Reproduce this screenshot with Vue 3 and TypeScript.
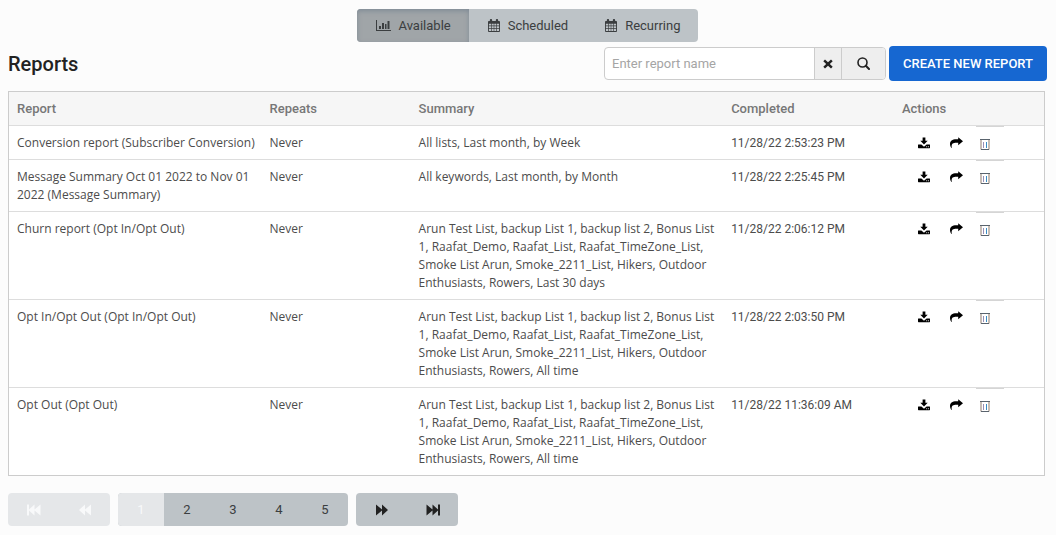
<script setup lang="ts">
import { ref } from 'vue'

interface Report {
  name: string
  repeats: string
  summary: string
  completed: string
}

const lists =
  'Arun Test List, backup List 1, backup list 2, Bonus List 1, Raafat_Demo, Raafat_List, Raafat_TimeZone_List, Smoke List Arun, Smoke_2211_List, Hikers, Outdoor Enthusiasts, Rowers, '

const reports: Report[] = [
  { name: 'Conversion report (Subscriber Conversion)', repeats: 'Never', summary: 'All lists, Last month, by Week', completed: '11/28/22 2:53:23 PM' },
  { name: 'Message Summary Oct 01 2022 to Nov 01 2022 (Message Summary)', repeats: 'Never', summary: 'All keywords, Last month, by Month', completed: '11/28/22 2:25:45 PM' },
  { name: 'Churn report (Opt In/Opt Out)', repeats: 'Never', summary: lists + 'Last 30 days', completed: '11/28/22 2:06:12 PM' },
  { name: 'Opt In/Opt Out (Opt In/Opt Out)', repeats: 'Never', summary: lists + 'All time', completed: '11/28/22 2:03:50 PM' },
  { name: 'Opt Out (Opt Out)', repeats: 'Never', summary: lists + 'All time', completed: '11/28/22 11:36:09 AM' },
]

const tabs = ['Available', 'Scheduled', 'Recurring']
const activeTab = ref('Available')
const query = ref('')
const page = ref(1)
</script>

<template>
  <main class="page">
    <nav class="tabs" aria-label="Report types">
      <button
        v-for="tab in tabs"
        :key="tab"
        type="button"
        class="tab"
        :class="{ active: tab === activeTab }"
        @click="activeTab = tab"
      >
        <svg v-if="tab === 'Available'" class="chart" viewBox="0 0 15 13" aria-hidden="true">
          <path d="M0 1h1v10h14v1H0zM3 7h2v3H3zM6 4h2v6H6zM9 5h1.500v5H9zM11.500 2h2v8h-2z" />
        </svg>
        <svg v-else class="calendar" viewBox="0 0 13 14" aria-hidden="true">
          <path
            fill-rule="evenodd"
            d="M1 2h1V1q0-1 1-1h.5q1 0 1 1v1h4V1q0-1 1-1h.5q1 0 1 1v1h1q1 0 1 1v10q0 1-1 1H1q-1 0-1-1V3q0-1 1-1zM1 5v2h2.300V5zM4 5v2h2.200V5zM6.800 5v2H9V5zM9.700 5v2H12V5zM1 7.700v2h2.300v-2zM4 7.700v2h2.200v-2zM6.800 7.700v2H9v-2zM9.700 7.700v2H12v-2zM1 10.400V13h2.300v-2.600zM4 10.400V13h2.200v-2.600zM6.800 10.400V13H9v-2.600zM9.700 10.400V13H12v-2.600z"
          />
        </svg>
        <span>{{ tab }}</span>
      </button>
    </nav>

    <header class="toolbar">
      <h1>Reports</h1>
      <form class="search" role="search" @submit.prevent>
        <input v-model="query" type="text" placeholder="Enter report name" aria-label="Report name" />
        <button type="button" class="clear" aria-label="Clear" @click="query = ''">
          <svg viewBox="0 0 10 10" aria-hidden="true">
            <path d="M2 .5 5 3.300 8 .5 9.700 2.200 6.800 5 9.700 7.800 8 9.500 5 6.700 2 9.500.3 7.800 3.200 5 .3 2.200z" />
          </svg>
        </button>
        <button type="submit" class="find" aria-label="Search">
          <svg viewBox="0 0 13 13" aria-hidden="true">
            <circle cx="5.500" cy="5.500" r="4.500" fill="none" stroke="currentColor" stroke-width="1.600" />
            <path d="m8.800 8.800 3.200 3.200" stroke="currentColor" stroke-width="2" stroke-linecap="round" />
          </svg>
        </button>
      </form>
      <button type="button" class="create">CREATE NEW REPORT</button>
    </header>

    <table class="reports">
      <colgroup>
        <col class="c-name" />
        <col class="c-repeats" />
        <col class="c-summary" />
        <col class="c-completed" />
        <col class="c-actions" />
      </colgroup>
      <thead>
        <tr>
          <th scope="col">Report</th>
          <th scope="col">Repeats</th>
          <th scope="col">Summary</th>
          <th scope="col">Completed</th>
          <th scope="col">Actions</th>
        </tr>
      </thead>
      <tbody>
        <tr v-for="report in reports" :key="report.completed">
          <td class="name">{{ report.name }}</td>
          <td>{{ report.repeats }}</td>
          <td>{{ report.summary }}</td>
          <td class="completed">{{ report.completed }}</td>
          <td class="actions-cell">
            <div class="actions">
              <button type="button" aria-label="Download">
                <svg class="download" viewBox="0 0 13 12" aria-hidden="true">
                  <path d="M5 0h3v3.500h2.500L6.500 7.500l-4-4H5z" />
                  <path fill-rule="evenodd" d="M.5 7.500h3.200L6.500 10l2.800-2.500h3.200q.5 0 .5.500v3q0 .7-.6.7H.6Q0 11.700 0 11V8q0-.5.5-.5zM9 9.600v.9h.9v-.9zM10.800 9.600v.9h.9v-.9z" />
                </svg>
              </button>
              <button type="button" aria-label="Share">
                <svg class="share" viewBox="0 0 13 11" aria-hidden="true">
                  <path d="M8.200.2v2.100H6.500C2 2.300 0 4 0 7.300 0 8.500.4 9.700 1.300 11c.3.2.5 0 .4-.3C1.300 7 2.500 5.800 6.500 5.800h1.700v2.400L13 4.200z" />
                </svg>
              </button>
              <button type="button" class="delete" aria-label="Delete">
                <svg class="trash" viewBox="0 0 10 11" aria-hidden="true">
                  <path d="M0 .5h10" stroke="#59636d" />
                  <path d="M1 1v9.500" stroke="#8d7a6c" />
                  <path d="M9 1v9.500" stroke="#8f7d6b" />
                  <path d="M1 10.500h8" stroke="#59636d" />
                  <path d="M3.500 3v6" stroke="#9a8fb5" />
                  <path d="M6.500 3v6" stroke="#3a8dc4" />
                </svg>
              </button>
            </div>
          </td>
        </tr>
      </tbody>
    </table>

    <nav class="pager" aria-label="Pages">
      <div class="group off">
        <button type="button" class="jump" disabled aria-label="First page">
          <svg class="skip" viewBox="0 0 14 12" aria-hidden="true">
            <path d="M0 .5h2v5L7.500.5v5L13.500.5v11L7.500 6.500v5L2 6.500v5H0z" />
          </svg>
        </button>
        <button type="button" class="jump" disabled aria-label="Previous page">
          <svg class="seek" viewBox="0 0 12 12" aria-hidden="true">
            <path d="M6 .5v5L12 .5v11L6 6.500v5L0 6z" />
          </svg>
        </button>
      </div>
      <div class="group">
        <button
          v-for="n in 5"
          :key="n"
          type="button"
          class="number"
          :class="{ current: n === page }"
          @click="page = n"
        >
          {{ n }}
        </button>
      </div>
      <div class="group">
        <button type="button" class="jump" aria-label="Next page">
          <svg class="seek" viewBox="0 0 12 12" aria-hidden="true">
            <path d="M0 .5 6 5.500v-5L12 6l-6 5.500v-5l-6 5z" />
          </svg>
        </button>
        <button type="button" class="jump" aria-label="Last page">
          <svg class="skip" viewBox="0 0 14 12" aria-hidden="true">
            <path d="M.5.500 6.500 5.500v-5L12 5.500v-5h2v11h-2v-5l-5.500 5v-5l-6 5z" />
          </svg>
        </button>
      </div>
    </nav>
  </main>
</template>

<style>
body {
  margin: 0;
  background: #fcfcfc;
}
</style>

<style scoped>
.page {
  padding: 9px 9px 9px 8px;
  font-family: Roboto, 'Liberation Sans', sans-serif;
  font-size: 13px;
  line-height: 18px;
  color: #4c4c4c;
}

.page *,
.page {
  box-sizing: border-box;
}

button,
input {
  margin: 0;
  padding: 0;
  border: 0;
  font: inherit;
  color: inherit;
  background: none;
}

button {
  cursor: pointer;
}

svg {
  display: block;
  flex: none;
  fill: currentColor;
}

.tabs {
  display: flex;
  width: max-content;
  height: 33px;
  margin: 0 auto;
  border-radius: 4px;
  overflow: hidden;
  background: #bdc3c7;
}

.tab {
  display: flex;
  align-items: center;
  gap: 8px;
  padding: 0 18px 0 19px;
  color: #3b3e40;
}

.tab.active {
  background: #a0a5a8;
  box-shadow: inset 0 2px 5px #7f8b96;
}

.chart {
  width: 15px;
  height: 13px;
}

.calendar {
  width: 12px;
  height: 13px;
}

.toolbar {
  display: flex;
  align-items: center;
  margin: 4px 0 10px;
}

h1 {
  flex: 1;
  margin: 0;
  font-size: 20px;
  line-height: 34px;
  font-weight: 500;
  color: #222;
}

.search {
  display: flex;
  height: 33px;
  margin-right: 3px;
  border: 1px solid #ccc;
  border-radius: 4px;
  overflow: hidden;
  background: #fff;
}

.search input {
  width: 209px;
  padding: 0 7px;
  outline: 0;
}

.search input::placeholder {
  color: #a5a5a5;
  opacity: 1;
}

.search button {
  display: flex;
  align-items: center;
  justify-content: center;
  border-left: 1px solid #ccc;
  background: #eee;
  color: #222;
}

.clear {
  width: 27px;
}

.clear svg {
  width: 10px;
  height: 10px;
}

.find {
  width: 44px;
}

.find svg {
  width: 13px;
  height: 13px;
}

.create {
  width: 158px;
  height: 35px;
  border-radius: 4px;
  background: #1667d1;
  color: #fff;
  font-size: 13px;
  font-weight: 500;
}

.reports {
  width: calc(100% - 2px);
  table-layout: fixed;
  border-collapse: separate;
  border-spacing: 0;
  border: 1px solid #ccc;
  background: #fff;
}

.c-name { width: 24.4%; }
.c-repeats { width: 14.4%; }
.c-summary { width: 30.2%; }
.c-completed { width: 16.5%; }
.c-actions { width: 14.5%; }

th,
td {
  padding: 8px 8px 7px;
  text-align: left;
  vertical-align: top;
  border-bottom: 1px solid #ddd;
}

th {
  background: #f6f6f6;
  color: #777;
  font-weight: 500;
}

td {
  font-family: 'Open Sans', 'Liberation Sans', sans-serif;
  font-size: 12px;
}

td.name {
  padding-right: 2px;
}

td.completed {
  font-family: Roboto, 'Liberation Sans', sans-serif;
}

tbody tr:last-child td {
  border-bottom: 0;
}

td.actions-cell {
  padding: 0 0 0 16px;
}

.actions {
  display: flex;
  gap: 5px;
  color: #000;
}

.actions button {
  display: flex;
  align-items: center;
  justify-content: center;
  width: 28px;
  height: 33px;
}

.actions .delete {
  justify-content: flex-start;
  padding: 3px 0 0 4px;
  border-top: 1px solid #d5d5d5;
}

.download {
  width: 12px;
  height: 12px;
}

.share {
  width: 13px;
  height: 11px;
}

.trash {
  width: 10px;
  height: 11px;
}

.pager {
  display: flex;
  gap: 8px;
  margin-top: 17px;
}

.group {
  display: flex;
  height: 33px;
  border-radius: 4px;
  overflow: hidden;
  background: #bdc3c7;
}

.group.off {
  background: #e5e7e9;
}

.jump {
  display: flex;
  align-items: center;
  justify-content: center;
  width: 51px;
  color: #222;
}

.off .jump {
  color: #f8f9fa;
}

.number {
  width: 46px;
  color: #3b3e40;
}

.number.current {
  background: #e5e7e9;
  color: #f8f9fa;
}

.skip {
  width: 14px;
  height: 12px;
}

.seek {
  width: 12px;
  height: 12px;
}
</style>
